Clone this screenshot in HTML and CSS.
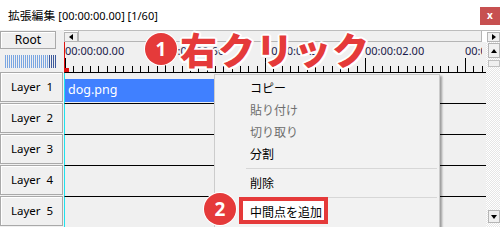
FILE: index.html
```html
<!DOCTYPE html>
<html>
<head>
<meta charset="utf-8">
<link rel="stylesheet" href="styles.css">
</head>
<body>
<div class="window">
  <div class="titlebar">
    <span class="title"><span class="cjk">拡張編集</span> <span class="lat">[00:00:00.00] [1/60]</span></span>
    <span class="close">x</span>
  </div>
  <div class="main">
    <div class="left">
      <div class="root-btn">Root</div>
      <div class="zoom-slider"></div>
      <div class="layer-btn">Layer&nbsp;&nbsp;1</div>
      <div class="layer-btn">Layer&nbsp;&nbsp;2</div>
      <div class="layer-btn">Layer&nbsp;&nbsp;3</div>
      <div class="layer-btn">Layer&nbsp;&nbsp;4</div>
      <div class="layer-btn">Layer&nbsp;&nbsp;5</div>
    </div>
    <div class="right">
      <div class="hscroll">
        <div class="arrow-btn arrow-left"><span class="tri-left"></span></div>
        <div class="hthumb"></div>
        <div class="htrack"></div>
        <div class="arrow-btn arrow-right"><span class="tri-right"></span></div>
      </div>
      <div class="lower">
        <div class="timeline">
          <div class="ruler">
            <div class="labels">
              <span>00:00:00.00</span>
              <span>00:00:00.66</span>
              <span>00:00:01.33</span>
              <span>00:00:02.00</span>
              <span>00:00:02.66</span>
            </div>
            <div class="ticks"></div>
            <div class="cursor-mark"></div>
          </div>
          <div class="row"><div class="clip">dog.png</div></div>
          <div class="row"></div>
          <div class="row"></div>
          <div class="row"></div>
          <div class="row"></div>
        </div>
        <div class="vscroll">
          <div class="varrow"><span class="tri-up"></span></div>
          <div class="vthumb"></div>
          <div class="vtrack"></div>
          <div class="varrow"><span class="tri-down"></span></div>
        </div>
      </div>
    </div>
  </div>

  <div class="menu">
    <div class="item">コピー</div>
    <div class="item disabled">貼り付け</div>
    <div class="item disabled">切り取り</div>
    <div class="item">分割</div>
    <div class="sep"></div>
    <div class="item">削除</div>
    <div class="sep"></div>
    <div class="item marked"><span class="mark-box"></span><span class="mark-text">中間点を追加</span></div>
  </div>

  <div class="callout1">
    <span class="badge">1</span>
    <span class="big">右クリック</span>
  </div>
  <span class="badge badge2">2</span>
</div>
</body>
</html>
```

FILE: styles.css
```css
* { box-sizing: border-box; }
html, body { margin: 0; padding: 0; }
body {
  width: 500px;
  height: 227px;
  overflow: hidden;
  font-family: "Noto Sans", "Noto Sans CJK JP", sans-serif;
  background: #f0f0f0;
  color: #000;
}
.window {
  position: relative;
  width: 500px;
  height: 227px;
  overflow: hidden;
}
.titlebar {
  height: 30px;
  background: #fff;
  display: flex;
  align-items: center;
  justify-content: space-between;
  padding-left: 8px;
}
.title { font-size: 12px; line-height: 14px; margin-top: 1px; }
.title .cjk { font-family: "Noto Sans CJK JP", sans-serif; font-size: 11.8px; }
.title .lat { font-size: 11px; }
.close {
  align-self: flex-start;
  margin-top: 7px;
  width: 20px;
  height: 18px;
  background: #c75050;
  color: #fff;
  font-size: 10px;
  line-height: 17px;
  text-align: center;
  font-weight: bold;
}
.main {
  display: flex;
  height: 197px;
}
.left {
  width: 64px;
  display: flex;
  flex-direction: column;
  padding-top: 1px;
}
.root-btn {
  width: 56px;
  height: 18px;
  border: 1px solid #a9a9a9;
  box-shadow: inset 1px 1px 0 #fff;
  background: #efefef;
  font-size: 12px;
  line-height: 16px;
  text-align: center;
}
.zoom-slider {
  margin: 6px 0 0 5px;
  width: 51px;
  height: 13px;
  background:
    linear-gradient(to right, transparent 0 44px, #3c5a9c 44px 51px),
    repeating-linear-gradient(to right, #7aa6e2 0 1px, #f4f8ff 1px 2px);
  -webkit-mask: repeating-linear-gradient(to right, #000 0 1px, transparent 1px 2px);
  mask: repeating-linear-gradient(to right, #000 0 1px, transparent 1px 2px);
}
.layer-btn {
  margin-top: 4px;
  width: 63px;
  height: 30px;
  border: 1px solid #a9a9a9;
  box-shadow: inset 1px 1px 0 #fff;
  background: #f0f0f0;
  font-size: 11.5px;
  line-height: 28px;
  text-align: center;
  padding-left: 1px;
}
.layer-btn + .layer-btn { margin-top: 1px; }
.right {
  width: 436px;
  display: flex;
  flex-direction: column;
}
.hscroll {
  height: 12px;
  display: flex;
  align-items: center;
  border-top: 1px solid #bdbdbd;
  background: #fff;
}
.arrow-btn {
  height: 10px;
  border: 1px solid #b5b5b5;
  background: #f0f0f0;
  display: flex;
  align-items: center;
  justify-content: center;
}
.arrow-left { width: 14px; }
.arrow-right { width: 13px; margin-left: 0; }
.hthumb {
  width: 404px;
  height: 11px;
  border: 1px solid #b5b5b5;
  border-top: none;
  background: #f0f0f0;
}
.htrack { flex: 1; height: 11px; }
.tri-left { border: 3px solid transparent; border-right: 4px solid #000; border-left: none; }
.tri-right { border: 3px solid transparent; border-left: 4px solid #000; border-right: none; }
.lower {
  display: flex;
  flex: 1;
}
.timeline {
  width: 422px;
  display: flex;
  flex-direction: column;
  overflow: hidden;
}
.ruler {
  position: relative;
  height: 31px;
  border-left: 1px solid #e01010;
  border-bottom: 1px solid #000;
  display: flex;
  flex-direction: column;
  justify-content: space-between;
}
.labels {
  display: flex;
  padding-top: 2px;
  white-space: nowrap;
  width: 417px;
  overflow: hidden;
}
.labels span {
  flex: 0 0 100px;
  font-size: 11px;
  line-height: 14px;
  color: #1b1b4a;
}
.ticks {
  height: 14px;
  background:
    repeating-linear-gradient(to right, #000 0 1px, transparent 1px 100px) top left / 100% 14px no-repeat,
    repeating-linear-gradient(to right, #000 0 1px, transparent 1px 8.333px) bottom left / 100% 6px no-repeat;
}
.cursor-mark {
  position: absolute;
  left: 0;
  bottom: 0;
  width: 4px;
  height: 4px;
  background: #e01010;
}
.row {
  height: 31px;
  border-left: 1px solid #1ee3ee;
  border-bottom: 1px solid #000;
  padding-top: 6px;
  flex: 0 0 31px;
}
.clip {
  width: 149px;
  height: 23px;
  background: #4080ff;
  color: #fff;
  font-size: 12.5px;
  line-height: 22px;
  padding-left: 3px;
}
.vscroll {
  width: 14px;
  display: flex;
  flex-direction: column;
  align-items: flex-end;
  background-color: #fff;
  background-image: repeating-conic-gradient(#e6e6e6 0 25%, #fff 0 50%);
  background-size: 2px 2px;
}
.varrow {
  width: 12px;
  height: 15px;
  border: 1px solid #b5b5b5;
  background: #f0f0f0;
  display: flex;
  align-items: center;
  justify-content: center;
  margin-top: 1px;
}
.vthumb {
  width: 12px;
  height: 7px;
  margin-top: 2px;
  border: 1px solid #c0c0c0;
  background: #f0f0f0;
}
.vtrack { height: 142px; }
.varrow:last-child { height: 13px; }
.tri-up { border: 3px solid transparent; border-bottom: 4px solid #000; border-top: none; }
.tri-down { border: 3px solid transparent; border-top: 4px solid #000; border-bottom: none; }

.menu {
  position: absolute;
  left: 214px;
  top: 74px;
  width: 226px;
  height: 170px;
  background: #f2f2f2;
  border: 1px solid #cccccc;
  box-shadow: 2px 2px 2px rgba(0,0,0,0.35);
  padding: 2px 2px 0 31px;
  font-family: "Noto Sans CJK JP", sans-serif;
  font-size: 12px;
}
.item {
  position: relative;
  height: 22px;
  line-height: 22px;
  padding-left: 4px;
}
.disabled { color: #6d6d6d; }
.sep {
  height: 7px;
  display: flex;
  align-items: center;
}
.sep::before {
  content: "";
  flex: 1;
  height: 1px;
  background: #d7d7d7;
}
.mark-box {
  position: absolute;
  left: -7px;
  top: -4px;
  width: 89px;
  height: 27px;
  border: 4px solid #e53a3a;
  background: #fff;
}
.mark-text { position: relative; }
.callout1 {
  position: absolute;
  left: 145px;
  top: 30px;
  display: flex;
  align-items: center;
  gap: 3px;
}
.badge {
  width: 32px;
  height: 32px;
  border-radius: 50%;
  background: #e53a3a;
  box-shadow: 0 0 0 1px #fff;
  color: #fff;
  font-family: "Noto Sans", sans-serif;
  font-weight: bold;
  font-size: 19px;
  line-height: 32px;
  text-align: center;
  display: inline-block;
}
.badge2 {
  position: absolute;
  left: 204px;
  top: 193px;
}
.big {
  font-family: "Noto Sans CJK JP", sans-serif;
  font-weight: 900;
  font-size: 37px;
  line-height: 38px;
  letter-spacing: 1px;
  color: #e53a3a;
  text-shadow:
    2px 0 0 #fff, -2px 0 0 #fff, 0 2px 0 #fff, 0 -2px 0 #fff,
    1.5px 1.5px 0 #fff, -1.5px 1.5px 0 #fff, 1.5px -1.5px 0 #fff, -1.5px -1.5px 0 #fff;
}
```
